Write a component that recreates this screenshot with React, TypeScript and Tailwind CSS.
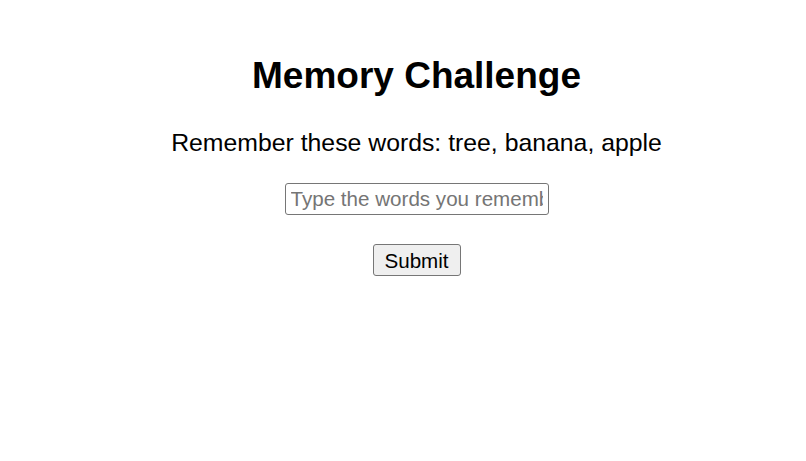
import { useState } from 'react'

export default function App() {
  const [value, setValue] = useState('')

  return (
    <div className="min-h-screen bg-white text-black font-['Liberation_Sans',Arial,sans-serif]">
      <div className="flex flex-col items-center pt-[55px] pl-[27px] text-center">
        <h1 className="text-[37px] font-bold leading-[42px]">Memory Challenge</h1>
        <p className="mt-[32px] text-[24.8px] leading-[28px]">
          Remember these words: tree, banana, apple
        </p>
        <input
          type="text"
          value={value}
          onChange={(e) => setValue(e.target.value)}
          placeholder="Type the words you remember"
          className="mt-[26px] w-[264px] h-[32px] px-[5px] text-[20.6px] border border-[#767676] rounded-[3px] placeholder:text-[#757575] outline-none"
        />
        <button className="mt-[29px] h-[32px] w-[88px] text-[20.6px] leading-[23px] bg-[#efefef] border border-[#767676] rounded-[3px]">
          Submit
        </button>
      </div>
    </div>
  )
}
